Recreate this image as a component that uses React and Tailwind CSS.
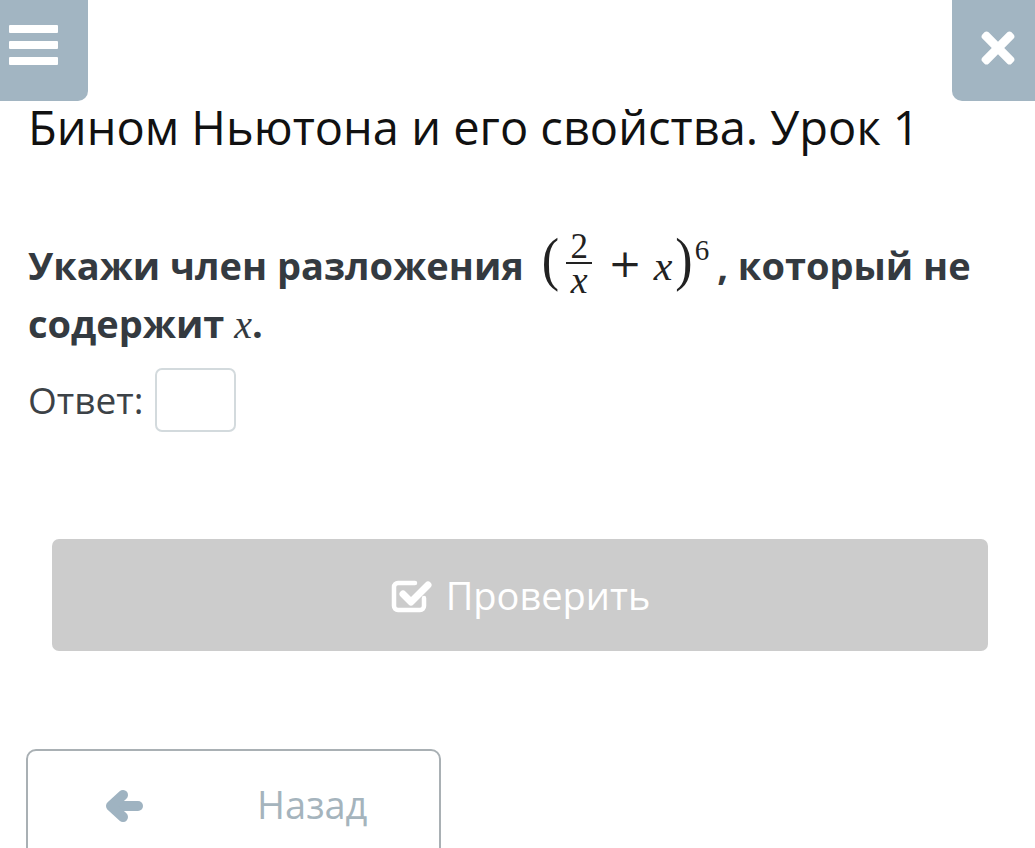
import React from 'react'
import { FaTimes } from 'react-icons/fa'

const serif = "font-['Liberation_Serif','DejaVu_Serif',serif]"

const CheckSquareIcon = () => (
  <svg viewBox="0 0 42 38" className="w-[42px] h-[38px]" fill="none" stroke="white" strokeLinecap="round" strokeLinejoin="round">
    <path d="M34 22 V30 a4 4 0 0 1 -4 4 H8 a4 4 0 0 1 -4 -4 V11 a4 4 0 0 1 4 -4 H25" strokeWidth="4.5" />
    <path d="M13 18 L21 26 L38 9" strokeWidth="7" />
  </svg>
)

const ArrowIcon = () => (
  <svg viewBox="0 0 40 34" className="w-[40px] h-[34px] shrink-0 ml-[76px]" fill="none" stroke="#9fb3c1" strokeLinecap="round" strokeLinejoin="round">
    <path d="M8 17 H34" strokeWidth="10" />
    <path d="M19 6 L7 17 L19 28" strokeWidth="10" />
  </svg>
)

const Formula = () => (
  <span className={`inline-flex items-center h-[30px] align-middle mb-[14px] ${serif} font-normal text-[#222] leading-none ml-[18px] mr-[8px]`}>
    <span className="text-[52px] leading-none scale-y-[1.15] -mt-[8px]">(</span>
    <span className="inline-flex flex-col items-center ml-[7px] mr-[16px]">
      <span className="text-[35px] leading-[30px]">2</span>
      <span className="w-[26px] h-[2px] bg-[#222] mb-[2px]" />
      <span className="text-[38px] italic leading-[28px]">x</span>
    </span>
    <span className="font-['DejaVu_Serif',serif] text-[40px] leading-none">+</span>
    <span className="text-[42px] italic leading-none ml-[12px] mt-[6px]">x</span>
    <span className="text-[52px] leading-none scale-y-[1.15] -mt-[8px] ml-[3px]">)</span>
    <span className="text-[29px] leading-none self-start -mt-[12px] ml-[2px]">6</span>
  </span>
)

export default function App() {
  return (
    <div className="w-[1035px] h-[848px] overflow-hidden bg-white font-['Open_Sans',sans-serif]">
      <div className="flex justify-between">
        <button type="button" className="w-[88px] h-[101px] bg-[#a2b5c2] rounded-br-[10px] flex flex-col gap-[8px] pl-[9px] pt-[25px]">
          <span className="block w-[49px] h-[8px] bg-white rounded-[1px]" />
          <span className="block w-[49px] h-[8px] bg-white rounded-[1px]" />
          <span className="block w-[49px] h-[8px] bg-white rounded-[1px]" />
        </button>
        <button type="button" className="w-[83px] h-[101px] bg-[#a2b5c2] rounded-bl-[10px] flex items-center justify-center pl-[8px] pb-[6px]">
          <FaTimes className="text-white w-[44px] h-[48px]" />
        </button>
      </div>

      <div className="px-[28px]">
        <h1 className="text-[47px] font-normal text-[#111] leading-none mt-[3px]">
          Бином Ньютона и его свойства. Урок 1
        </h1>

        <p className="mt-[85px] text-[38px] font-bold text-[#343a40] leading-[58px]">
          Укажи член разложения
          <Formula />, который не содержит <span className={`${serif} italic font-normal text-[40px]`}>x</span>.
        </p>

        <div className="mt-[14px] flex items-center gap-[12px]">
          <span className="text-[37px] text-[#3c4247]">Ответ:</span>
          <div className="w-[81px] h-[64px] border-[2px] border-[#d3dadd] rounded-[7px] bg-white" />
        </div>
      </div>

      <div className="pl-[52px] pr-[47px] mt-[107px]">
        <button type="button" className="w-full h-[112px] bg-[#cccccc] rounded-[7px] flex items-center justify-center gap-[14px] text-white text-[38px]">
          <CheckSquareIcon />
          <span>Проверить</span>
        </button>
      </div>

      <div className="px-[26px] mt-[98px]">
        <button type="button" className="w-[415px] h-[120px] border-[2px] border-[#a9b0b4] rounded-[10px] flex items-start pt-[38px] bg-white">
          <ArrowIcon />
          <span className="ml-[113px] -mt-[4px] text-[38px] text-[#a5b4bd] leading-none">Назад</span>
        </button>
      </div>
    </div>
  )
}
